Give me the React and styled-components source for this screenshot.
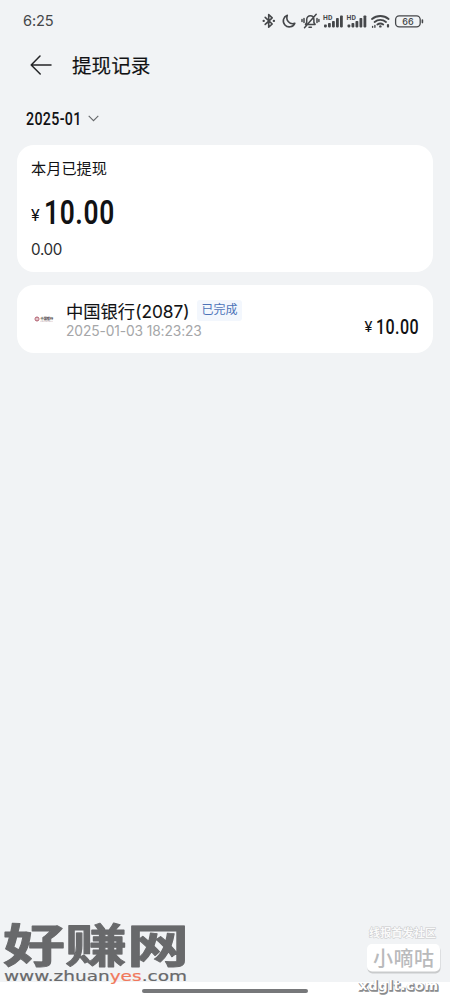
import React from 'react';
import styled, { createGlobalStyle } from 'styled-components';

const GlobalStyle = createGlobalStyle`
  * {
    box-sizing: border-box;
  }
  body {
    margin: 0;
    background: #f1f3f5;
    font-family: "Open Sans", "Noto Sans CJK SC", sans-serif;
    color: #111214;
  }
`;

const Screen = styled.div`
  display: flex;
  flex-direction: column;
  position: relative;
  width: 450px;
  height: 1000px;
  overflow: hidden;
  background: #f1f3f5;
`;

const StatusBar = styled.div`
  display: flex;
  align-items: center;
  justify-content: space-between;
  height: 41px;
  padding: 0 27px 0 23px;
`;

const Clock = styled.span`
  font-family: Inter, sans-serif;
  font-size: 14.6px;
  line-height: 20px;
  letter-spacing: -0.1px;
  color: #45474a;
`;

const StatusIcons = styled.svg`
  display: block;
  width: 162px;
  height: 20px;
  overflow: visible;
`;

const Header = styled.header`
  display: flex;
  align-items: center;
  height: 48px;
  padding-left: 30px;
  gap: 20px;
`;

const Title = styled.h1`
  margin: 0;
  font-size: 19.6px;
  font-weight: 400;
  line-height: 28px;
  padding-top: 1px;
  -webkit-text-stroke: 0.15px currentColor;
`;

const MonthPicker = styled.div`
  display: flex;
  align-items: center;
  height: 56px;
  padding: 5px 0 0 26px;
  gap: 5px;
`;

/* Squeezes the digits to the narrow shape of a DIN face */
const Narrow = styled.span`
  display: inline-block;
  width: ${(p) => p.$width}px;
  font-family: Roboto, sans-serif;
  font-size: ${(p) => p.$size}px;
  font-weight: ${(p) => p.$weight || 500};
  letter-spacing: ${(p) => p.$spacing || 0}px;
  line-height: 1;
  white-space: nowrap;
  transform: scaleX(${(p) => p.$scale});
  transform-origin: left center;
`;

const Card = styled.section`
  margin: 0 17.5px 0 17px;
  border-radius: 17px;
  background: #fff;
`;

const SummaryCard = styled(Card)`
  display: flex;
  flex-direction: column;
  height: 127px;
  padding: 11px 14px;
`;

const SummaryLabel = styled.div`
  font-size: 15.2px;
  line-height: 24px;
`;

const Amount = styled.div`
  display: flex;
  align-items: baseline;
  gap: ${(p) => p.$gap}px;
  margin-top: ${(p) => p.$top || 0}px;
`;

const Yen = styled.span`
  width: ${(p) => p.$width}px;
  padding-bottom: ${(p) => p.$lift}px;
  align-self: flex-end;
  font-family: Roboto, sans-serif;
  font-size: ${(p) => p.$size}px;
  line-height: 1;
`;

const SubAmount = styled.div`
  margin-top: 10px;
  font-family: Inter, sans-serif;
  font-size: 15.2px;
  line-height: 20px;
  letter-spacing: -0.3px;
  color: #2c2d30;
`;

const RecordCard = styled(Card)`
  display: flex;
  height: 68px;
  margin-top: 13px;
  padding: 14px 14px 0 17px;
`;

const BankLogo = styled.svg`
  width: 20px;
  height: 10px;
  margin-top: 15px;
`;

const RecordBody = styled.div`
  flex: 1;
  margin-left: 12px;
`;

const RecordTitle = styled.div`
  display: flex;
  align-items: center;
  height: 22px;
  gap: 9px;
`;

const BankName = styled.span`
  width: 122px;
  font-family: Inter, "Noto Sans CJK SC", sans-serif;
  font-size: 17.3px;
  font-weight: 400;
  white-space: nowrap;
  -webkit-text-stroke: 0.1px currentColor;
`;

const Badge = styled.span`
  width: 45px;
  height: 21px;
  border-radius: 3px;
  background: #f3f7fd;
  color: #4c73b8;
  font-size: 12px;
  line-height: 20px;
  text-align: center;
`;

const RecordTime = styled.div`
  margin-top: 1px;
  font-family: Inter, sans-serif;
  font-size: 13.8px;
  line-height: 18px;
  letter-spacing: -0.12px;
  color: #a5a6a8;
  white-space: nowrap;
`;

const RecordAmount = styled.div`
  padding-top: 19px;
`;

const GestureBar = styled.footer`
  display: flex;
  justify-content: center;
  height: 18px;
  margin-top: auto;
  padding-top: 7px;
  background: #fff;
`;

const Handle = styled.div`
  width: 166px;
  height: 4px;
  border-radius: 2px;
  background: #77787a;
`;

const SiteMark = styled.svg`
  position: absolute;
  left: 0;
  bottom: 10px;
  width: 200px;
  height: 74px;
  overflow: visible;
`;

const ForumMark = styled.svg`
  position: absolute;
  right: 0;
  bottom: 0;
  width: 100px;
  height: 80px;
`;

const Signal = ({ x }) => (
  <g transform={`translate(${x} 0)`} fill="#45474a">
    <text x="0" y="8.7" fontFamily="Roboto, sans-serif" fontSize="6.8" fontWeight="700" textLength="9.4">HD</text>
    <rect x="1" y="13.6" width="2.8" height="2.8" rx="0.8" />
    <rect x="5" y="12" width="2.8" height="4.4" rx="0.8" />
    <rect x="9" y="10" width="2.8" height="6.4" rx="0.8" />
    <rect x="13" y="7" width="2.8" height="9.4" rx="0.8" />
    <rect x="17" y="4.5" width="2.8" height="11.9" rx="0.8" />
  </g>
);

const StatusGlyphs = () => (
  <StatusIcons viewBox="0 0 162 20" fill="none" stroke="#45474a" strokeWidth="1.6" strokeLinecap="round" strokeLinejoin="round">
    {/* bluetooth */}
    <path d="M4.2 6.4l7 6.6-3.5 3.2V3.6l3.5 3.2-7 6.6" />
    <path d="M2.6 9.9h.2M12.8 9.9h.2" strokeWidth="2.2" />
    {/* do not disturb */}
    <path d="M26.3 4.2a6 6 0 1 0 7.5 8.1c-5.2 1.7-9.3-3-7.5-8.1z" />
    {/* muted bell */}
    <g strokeWidth="1.5">
      <path d="M44.5 13.5h9.6l-1.2-2V8.6c0-5.2-7.2-5.2-7.2 0v2.9zM48 16.3h2.4M55.2 3.3L43.5 16.8" />
      <path d="M43 7.5v4M41 8.5v2M56 7.5v4M57.9 8.5v2" />
    </g>
    <g stroke="none">
      <Signal x={62} />
      <Signal x={85.5} />
    </g>
    {/* wifi */}
    <g strokeWidth="1.9">
      <path d="M111 8a13 13 0 0 1 16.6 0M113.6 10.9a9 9 0 0 1 11.4 0M116.4 13.5a5 5 0 0 1 5.8 0" />
      <path d="M119.3 15.4h.1" strokeWidth="2.4" />
      <path d="M111.6 15.4v.8M113.9 14.4v1.8" strokeWidth="1.4" />
      <path d="M127 14v1.6" strokeWidth="2.2" />
    </g>
    {/* battery */}
    <rect x="134.6" y="4.9" width="24.6" height="11" rx="3.6" strokeWidth="1.3" />
    <path d="M161.4 9v2.6" strokeWidth="1.6" />
    <text x="141.2" y="13.7" stroke="none" fill="#45474a" fontFamily="Inter, sans-serif" fontSize="9" fontWeight="500" textLength="11.4">66</text>
  </StatusIcons>
);

const App = () => (
  <>
    <GlobalStyle />
    <Screen>
      <StatusBar>
        <Clock>6:25</Clock>
        <StatusGlyphs />
      </StatusBar>

      <Header>
        <svg width="22" height="20" viewBox="0 0 22 20" fill="none" stroke="#242527" strokeWidth="1.5" strokeLinecap="round" strokeLinejoin="round">
          <path d="M21 10H1.2M10 1L1.2 10l9 9" />
        </svg>
        <Title>提现记录</Title>
      </Header>

      <MonthPicker>
        <Narrow $size={17.6} $width={57} $scale={0.81} $spacing={0.4}>2025-01</Narrow>
        <svg width="11" height="9" viewBox="0 0 11 9" fill="none" stroke="#66686b" strokeWidth="1.1">
          <path d="M.7.8l4.8 4.8L10.3.8" />
        </svg>
      </MonthPicker>

      <SummaryCard>
        <SummaryLabel>本月已提现</SummaryLabel>
        <Amount $gap={3} $top={17}>
          <Yen $size={16.5} $width={10} $lift={5}>¥</Yen>
          <Narrow $size={32.5} $width={71} $scale={0.81} $spacing={0.8} $weight={600}>10.00</Narrow>
        </Amount>
        <SubAmount>0.00</SubAmount>
      </SummaryCard>

      <RecordCard>
        <BankLogo viewBox="0 0 20 10">
          <circle cx="3" cy="5" r="2" fill="none" stroke="#b05a6a" strokeWidth="1" />
          <path d="M3 3v4" stroke="#b05a6a" strokeWidth="0.7" />
          <text x="6.5" y="5.8" fontSize="3.2" fontFamily="Noto Sans CJK SC, sans-serif" fontWeight="700" fill="#3b3033">中国银行</text>
          <path d="M6.5 7.3h12" stroke="#a8848c" strokeWidth="0.5" strokeDasharray="1 0.4" />
        </BankLogo>
        <RecordBody>
          <RecordTitle>
            <BankName>中国银行(2087)</BankName>
            <Badge>已完成</Badge>
          </RecordTitle>
          <RecordTime>2025-01-03 18:23:23</RecordTime>
        </RecordBody>
        <RecordAmount>
          <Amount $gap={2}>
            <Yen $size={15} $width={9} $lift={3}>¥</Yen>
            <Narrow $size={19.6} $width={43} $scale={0.82} $spacing={0.5}>10.00</Narrow>
          </Amount>
        </RecordAmount>
      </RecordCard>

      <GestureBar>
        <Handle />
      </GestureBar>

      <SiteMark viewBox="0 0 200 74">
        <g transform="translate(3 46) scale(1 0.74)">
          <text x="0" y="0" fontFamily="Noto Sans CJK SC, sans-serif" fontSize="62" fontWeight="700" fill="#68696b" stroke="#68696b" strokeWidth="1.2" strokeLinejoin="round" textLength="186" lengthAdjust="spacingAndGlyphs">好赚网</text>
        </g>
        <text x="4" y="65" fontFamily="DejaVu Sans, sans-serif" fontSize="14.5" fill="#68696b" stroke="#68696b" strokeWidth="0.2" textLength="183" lengthAdjust="spacingAndGlyphs">
          www.zhuan<tspan fill="#f0785c" stroke="#f0785c">yes</tspan>.com
        </text>
      </SiteMark>

      <ForumMark viewBox="0 0 100 80">
        <g fontFamily="Noto Sans CJK SC, sans-serif" fontWeight="700">
          <text x="19" y="17" fontSize="11" fill="#fafafa" stroke="#c6c7c9" strokeWidth="0.9" paintOrder="stroke" textLength="67">线报首发社区</text>
          <rect x="17.5" y="25.5" width="73" height="28" rx="5" fill="#bfc0c2" opacity="0.8" />
          <rect x="17" y="24" width="73" height="27.5" rx="5" fill="#fff" />
          <text x="23" y="46" fontSize="20" fontWeight="500" fill="#b9babc" textLength="61">小嘀咕</text>
        </g>
        <g fontFamily="DejaVu Sans, sans-serif" fontSize="13" fontWeight="700">
          <text x="9.8" y="70.8" fill="#8a8b8d" stroke="#8a8b8d" strokeWidth="1.6" textLength="79" lengthAdjust="spacing">xdglt.com</text>
          <text x="9" y="69.8" fill="#fff" textLength="79" lengthAdjust="spacing">xdglt.com</text>
        </g>
      </ForumMark>
    </Screen>
  </>
);

export default App;
